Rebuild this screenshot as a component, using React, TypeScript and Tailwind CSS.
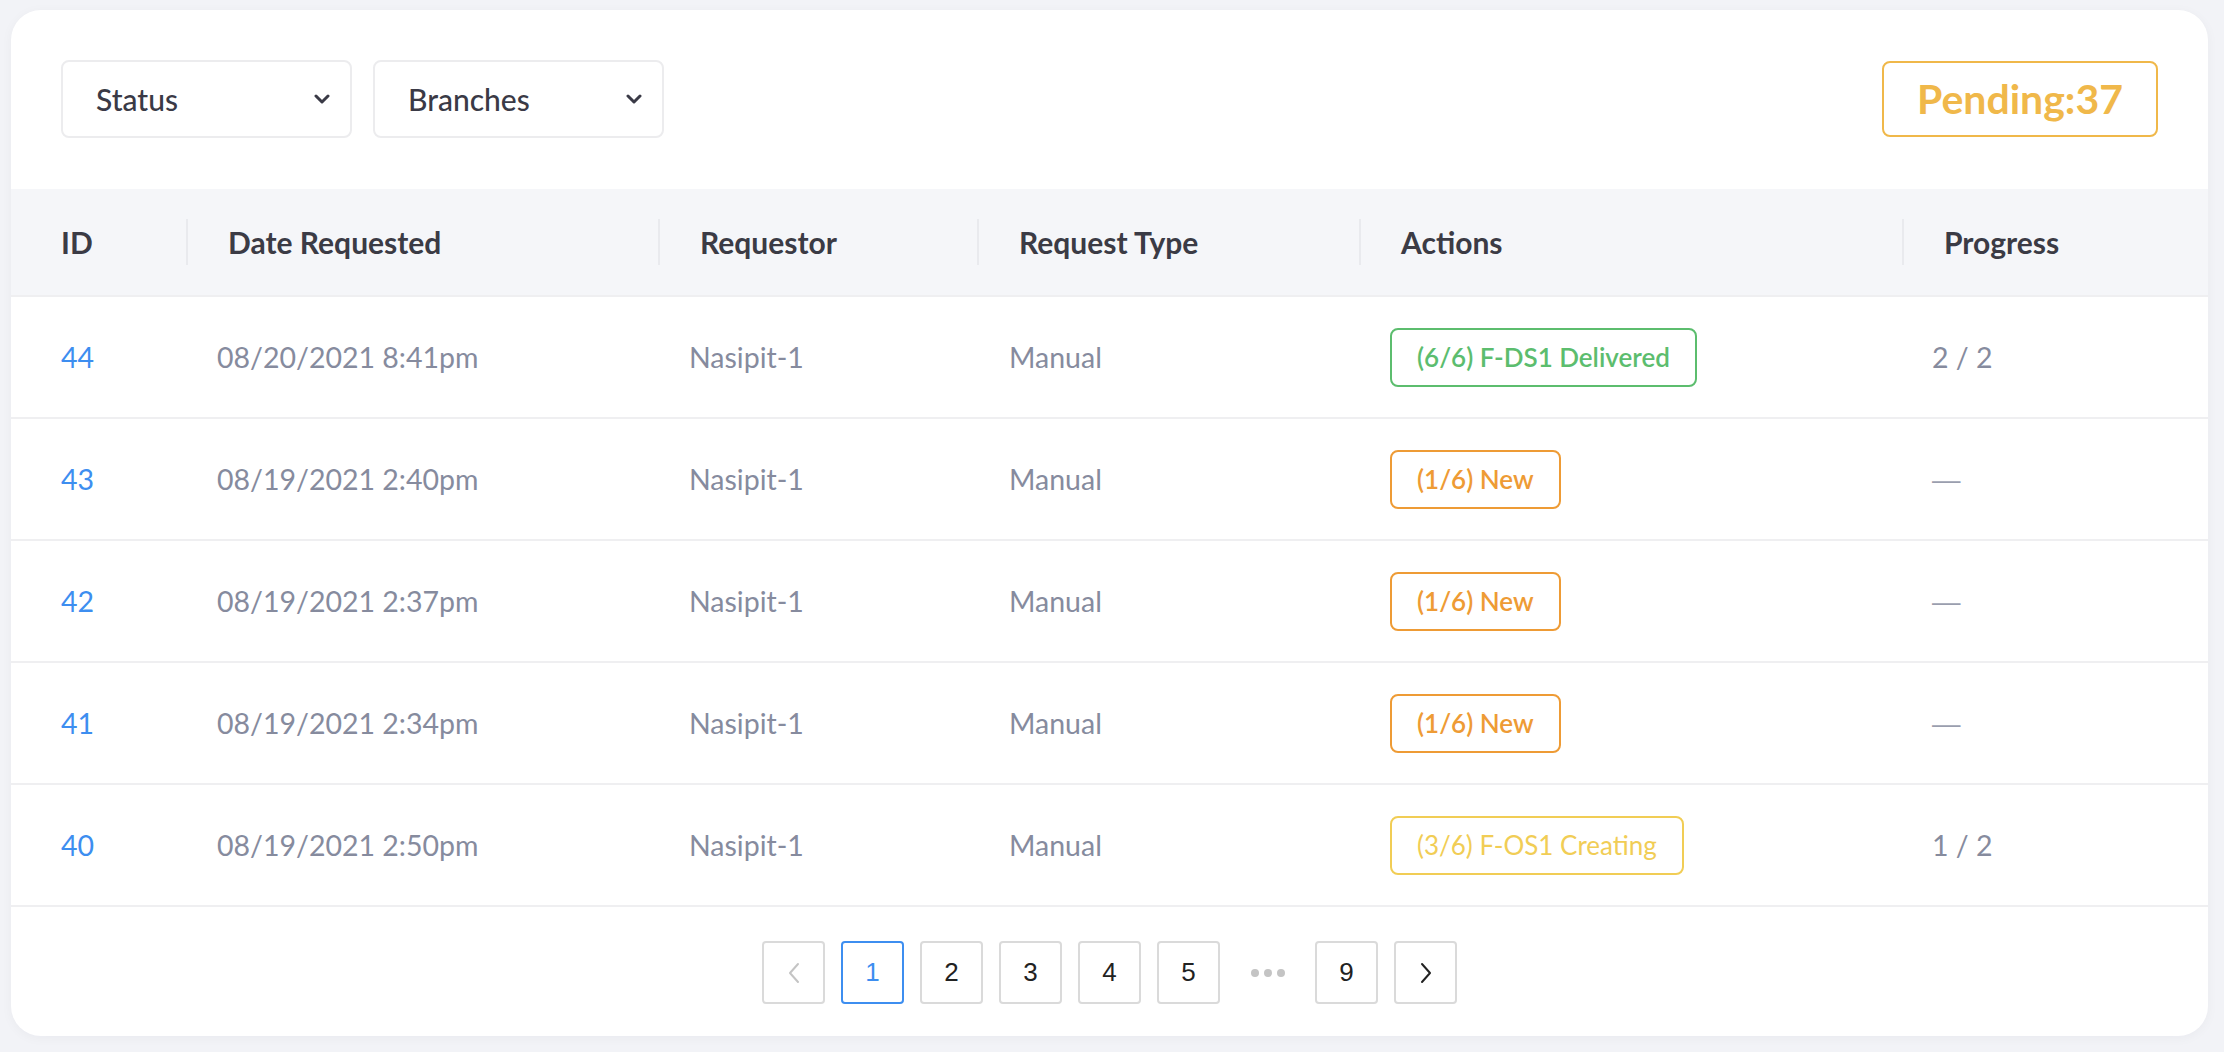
const rows = [
  { id: 44, date: "08/20/2021 8:41pm", requestor: "Nasipit-1", type: "Manual", action: "(6/6) F-DS1 Delivered", tone: "green", progress: "2 / 2" },
  { id: 43, date: "08/19/2021 2:40pm", requestor: "Nasipit-1", type: "Manual", action: "(1/6) New", tone: "orange", progress: "—" },
  { id: 42, date: "08/19/2021 2:37pm", requestor: "Nasipit-1", type: "Manual", action: "(1/6) New", tone: "orange", progress: "—" },
  { id: 41, date: "08/19/2021 2:34pm", requestor: "Nasipit-1", type: "Manual", action: "(1/6) New", tone: "orange", progress: "—" },
  { id: 40, date: "08/19/2021 2:50pm", requestor: "Nasipit-1", type: "Manual", action: "(3/6) F-OS1 Creating", tone: "yellow", progress: "1 / 2" },
];

const toneClass: Record<string, string> = {
  green: "border-[#5cbd6e] text-[#5cbd6e] font-semibold",
  orange: "border-[#ee9b35] text-[#ee9b35] font-semibold",
  yellow: "border-[#f1cd55] text-[#f1cd55] font-normal",
};

const grid = "grid grid-cols-[175px_472px_319px_382px_543px_1fr]";

const Chevron = () => (
  <svg width="16" height="10" viewBox="0 0 16 10" fill="none">
    <path d="M2 2l6 6 6-6" stroke="#3a3a46" strokeWidth="3" strokeLinecap="round" strokeLinejoin="round" />
  </svg>
);

const Select = ({ label }: { label: string }) => (
  <div className="flex items-center justify-between w-[291px] h-[78px] pl-[33px] pr-[20px] border-2 border-[#ececee] rounded-lg text-[30px] text-[#3a3a46] font-medium">
    <span>{label}</span>
    <Chevron />
  </div>
);

const headers = ["ID", "Date Requested", "Requestor", "Request Type", "Actions", "Progress"];

const PageBtn = ({ children, active }: { children: React.ReactNode; active?: boolean }) => (
  <div
    className={
      "flex items-center justify-center w-[63px] h-[63px] rounded border-2 text-[26px] font-['Liberation_Sans',sans-serif] " +
      (active ? "border-[#3d8ef0] text-[#3d8ef0]" : "border-[#dadada] text-[#222]")
    }
  >
    {children}
  </div>
);

export default function App() {
  return (
    <div className="min-h-screen bg-[#f2f3f7] pl-[11px] pr-[16px] pt-[10px] font-['Lato',sans-serif]">
      <div className="bg-white rounded-[30px] overflow-hidden shadow-[0_2px_12px_rgba(20,30,60,0.04)]">
        <div className="flex items-center justify-between px-[50px] pt-[50px] pb-[51px]">
          <div className="flex gap-[21px]">
            <Select label="Status" />
            <Select label="Branches" />
          </div>
          <div className="flex items-center justify-center w-[276px] h-[76px] border-2 border-[#f0b84a] rounded-lg text-[41px] font-bold text-[#f0b84a]">
            Pending:37
          </div>
        </div>

        <div className={grid + " bg-[#f5f6f9] h-[108px] items-center border-b-2 border-[#efeff1]"}>
          {headers.map((h, i) => (
            <div
              key={h}
              className={
                "text-[30px] font-bold text-[#3b3b45] " +
                (i === 0 ? "pl-[50px]" : "pl-[40px] border-l-2 border-[#e9eaee] h-[46px] flex items-center")
              }
            >
              {h}
            </div>
          ))}
        </div>

        {rows.map((r) => (
          <div key={r.id} className={grid + " h-[122px] items-center border-b-2 border-[#efeff1] text-[28.5px] text-[#868b9e]"}>
            <div className="pl-[50px] text-[#3d8ef0]">{r.id}</div>
            <div className="pl-[31px]">{r.date}</div>
            <div className="pl-[31px]">{r.requestor}</div>
            <div className="pl-[32px]">{r.type}</div>
            <div className="pl-[31px]">
              <span className={"inline-flex items-center h-[59px] px-[25px] border-2 rounded-lg text-[26px] " + toneClass[r.tone]}>
                {r.action}
              </span>
            </div>
            <div className={"pl-[30px] " + (r.progress === "—" ? "font-['Liberation_Sans',sans-serif] text-[#9a9eae]" : "")}>{r.progress}</div>
          </div>
        ))}

        <div className="flex justify-center gap-[16px] pt-[34px] pb-[32px]">
          <PageBtn>
            <svg width="14" height="24" viewBox="0 0 14 24" fill="none">
              <path d="M11 3L3 12l8 9" stroke="#c4c4c4" strokeWidth="2" strokeLinecap="round" strokeLinejoin="round" />
            </svg>
          </PageBtn>
          <PageBtn active>1</PageBtn>
          <PageBtn>2</PageBtn>
          <PageBtn>3</PageBtn>
          <PageBtn>4</PageBtn>
          <PageBtn>5</PageBtn>
          <div className="flex items-center justify-center gap-[5px] w-[63px] h-[63px]">
            <span className="w-[8px] h-[8px] rounded-full bg-[#c4c4c4]" />
            <span className="w-[8px] h-[8px] rounded-full bg-[#c4c4c4]" />
            <span className="w-[8px] h-[8px] rounded-full bg-[#c4c4c4]" />
          </div>
          <PageBtn>9</PageBtn>
          <PageBtn>
            <svg width="14" height="24" viewBox="0 0 14 24" fill="none">
              <path d="M3 3l8 9-8 9" stroke="#222" strokeWidth="2" strokeLinecap="round" strokeLinejoin="round" />
            </svg>
          </PageBtn>
        </div>
      </div>
    </div>
  );
}
